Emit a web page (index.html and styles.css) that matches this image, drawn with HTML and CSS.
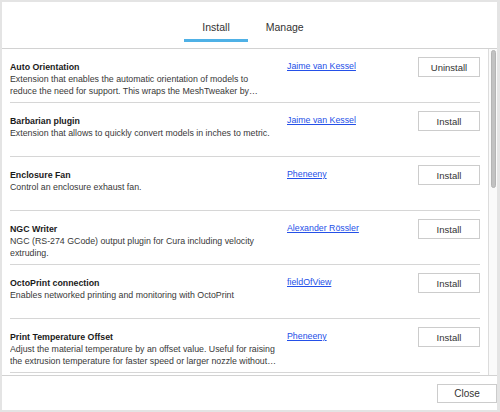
FILE: index.html
```html
<!DOCTYPE html>
<html>
<head>
<meta charset="utf-8">
<link rel="stylesheet" href="styles.css">
</head>
<body>
<div class="window">
  <div class="tabs">
    <div class="tab active">Install</div>
    <div class="tab">Manage</div>
  </div>
  <div class="list">
    <div class="items">
      <div class="item">
        <div class="info">
          <div class="title">Auto Orientation</div>
          <div class="desc">Extension that enables the automatic orientation of models to reduce the need for support. This wraps the MeshTweaker by Christoph Schranz.</div>
        </div>
        <a class="author" href="#">Jaime van Kessel</a>
        <button class="btn">Uninstall</button>
      </div>
      <div class="item">
        <div class="info">
          <div class="title">Barbarian plugin</div>
          <div class="desc">Extension that allows to quickly convert models in inches to metric.</div>
        </div>
        <a class="author" href="#">Jaime van Kessel</a>
        <button class="btn">Install</button>
      </div>
      <div class="item">
        <div class="info">
          <div class="title">Enclosure Fan</div>
          <div class="desc">Control an enclosure exhaust fan.</div>
        </div>
        <a class="author" href="#">Pheneeny</a>
        <button class="btn">Install</button>
      </div>
      <div class="item">
        <div class="info">
          <div class="title">NGC Writer</div>
          <div class="desc">NGC (RS-274 GCode) output plugin for Cura including velocity extruding.</div>
        </div>
        <a class="author" href="#">Alexander Rössler</a>
        <button class="btn">Install</button>
      </div>
      <div class="item">
        <div class="info">
          <div class="title">OctoPrint connection</div>
          <div class="desc">Enables networked printing and monitoring with OctoPrint</div>
        </div>
        <a class="author" href="#">fieldOfView</a>
        <button class="btn">Install</button>
      </div>
      <div class="item">
        <div class="info">
          <div class="title">Print Temperature Offset</div>
          <div class="desc">Adjust the material temperature by an offset value. Useful for raising the extrusion temperature for faster speed or larger nozzle without changing the material profile.</div>
        </div>
        <a class="author" href="#">Pheneeny</a>
        <button class="btn">Install</button>
      </div>
      <div class="item">
        <div class="info">
          <div class="title">Solid Inspector</div>
          <div class="desc">Checks models for errors.</div>
        </div>
        <a class="author" href="#">Ultimaker</a>
        <button class="btn">Install</button>
      </div>
    </div>
    <div class="scrollbar"><div class="thumb"></div></div>
  </div>
  <div class="footer">
    <button class="btn close">Close</button>
  </div>
</div>
</body>
</html>
```
FILE: styles.css
```css
html, body {
  margin: 0;
  padding: 0;
  background: #ffffff;
}
body {
  font-family: "Liberation Sans", Arial, sans-serif;
  color: #333333;
}
.window {
  width: 500px;
  height: 412px;
  box-sizing: border-box;
  border-style: solid;
  border-color: #e4e4e4;
  border-width: 2px 3px 2px 2px;
  display: flex;
  flex-direction: column;
  background: #ffffff;
}
.tabs {
  height: 47px;
  box-sizing: border-box;
  border-bottom: 1px solid #d2d2d2;
  display: flex;
  justify-content: center;
  align-items: flex-start;
  padding-top: 17px;
  padding-left: 7px;
}
.tab {
  font-size: 10.5px;
  line-height: 14px;
  padding: 5px 18px 5px 18px;
  margin-top: -4px;
  border-bottom: 3px solid transparent;
  color: #333333;
}
.tab.active {
  border-bottom-color: #4fb1e6;
}
.list {
  height: 327px;
  box-sizing: border-box;
  border-bottom: 1px solid #d2d2d2;
  display: flex;
  overflow: hidden;
}
.items {
  flex: 1;
  padding: 0 8px;
  overflow: hidden;
}
.item {
  height: 54px;
  box-sizing: border-box;
  border-bottom: 1px solid #d6d6d6;
  display: grid;
  grid-template-columns: 277px 131px 62px;
  column-gap: 0;
  align-items: start;
}
.info {
  padding-top: 12px;
  padding-right: 11px;
}
.title {
  font-size: 8.8px;
  line-height: 12px;
  font-weight: bold;
  color: #1a1a1a;
}
.desc {
  font-size: 8.8px;
  line-height: 12px;
  color: #383838;
  display: -webkit-box;
  -webkit-line-clamp: 2;
  -webkit-box-orient: vertical;
  overflow: hidden;
}
.author {
  margin-top: 11px;
  font-size: 8.8px;
  line-height: 12px;
  color: #2450e8;
  text-decoration: underline;
  justify-self: start;
}
.btn {
  margin-top: 8px;
  height: 20px;
  width: 62px;
  box-sizing: border-box;
  border: 1px solid #cccccc;
  background: #ffffff;
  font-family: "Liberation Sans", Arial, sans-serif;
  font-size: 9.5px;
  color: #333333;
  padding: 0;
  border-radius: 0;
}
.scrollbar {
  width: 9px;
  box-sizing: border-box;
  border-left: 1px solid #dcdcdc;
  background: #fafafa;
  padding: 1px 1px 0 2px;
}
.thumb {
  height: 138px;
  box-sizing: border-box;
  background: #c2c2c2;
  border: 1px solid #b4b4b4;
  border-radius: 3px;
}
.footer {
  flex: 1;
  display: flex;
  justify-content: flex-end;
  align-items: flex-start;
  padding-top: 8px;
}
.btn.close {
  margin-top: 0;
  width: 60px;
  height: 19px;
  font-size: 10px;
  line-height: 17px;
}
```
